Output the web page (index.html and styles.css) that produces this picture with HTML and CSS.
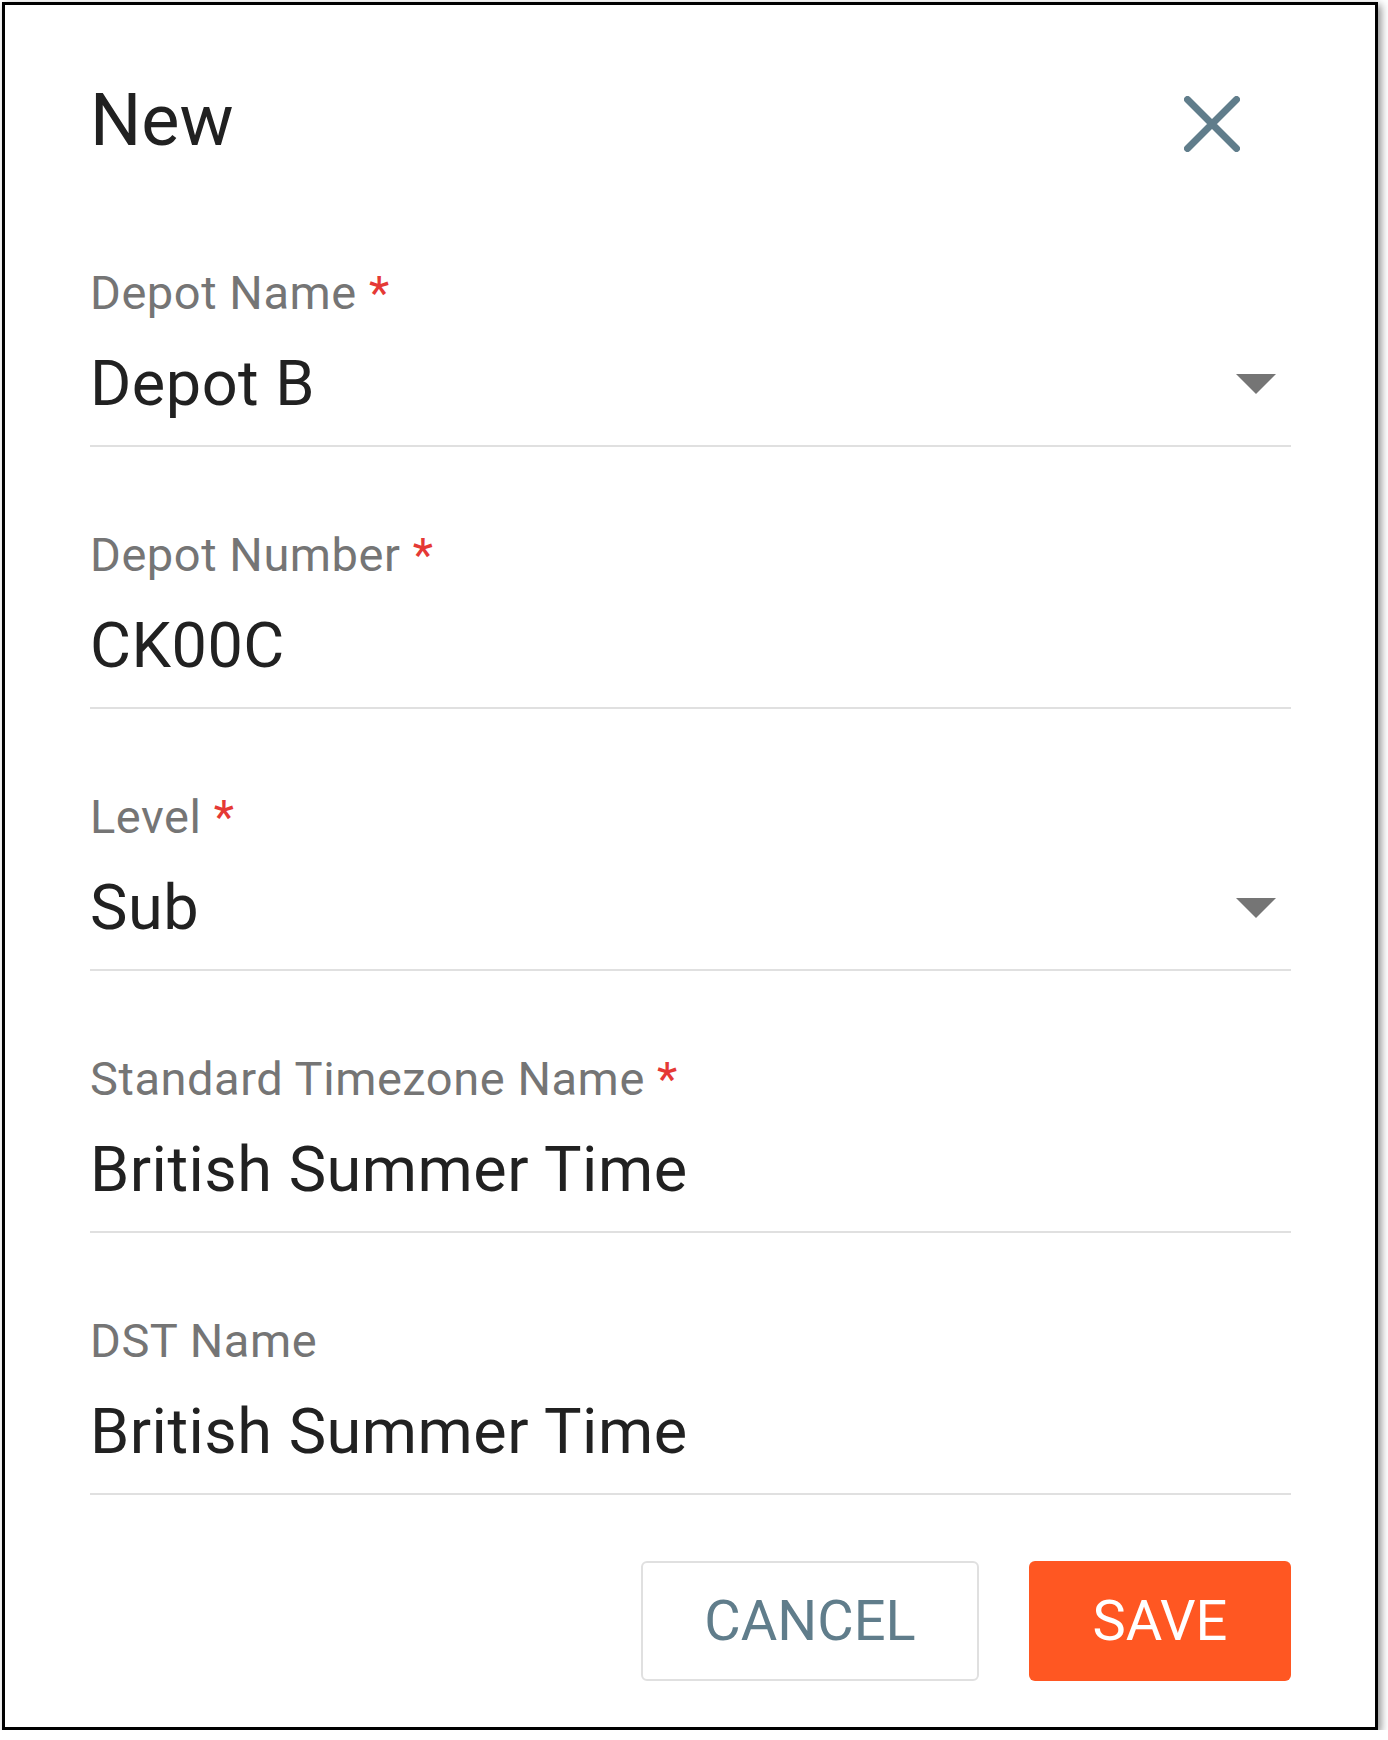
FILE: index.html
```html
<!DOCTYPE html>
<html lang="en">
<head>
  <meta charset="UTF-8" />
  <title>New Depot</title>
  <link rel="stylesheet" href="styles.css">
</head>
<body>

  <div class="dialogo">
    <header class="dialogo-header">
      <h1>New</h1>
      <button class="cerrar" aria-label="Close">
        <svg width="56" height="56" viewBox="0 0 56 56">
          <path d="M3.5 3.5L52.5 52.5M52.5 3.5L3.5 52.5" stroke="#607d8b" stroke-width="7" stroke-linecap="round" fill="none"/>
        </svg>
      </button>
    </header>

    <div class="formulario">
      <div class="campo">
        <label>Depot Name <span class="req">*</span></label>
        <div class="valor">
          <span>Depot B</span>
          <svg class="flecha" width="40" height="20" viewBox="0 0 10 5"><path d="M0 0L5 5L10 0Z" fill="#757575"/></svg>
        </div>
      </div>

      <div class="campo">
        <label>Depot Number <span class="req">*</span></label>
        <div class="valor"><span>CK00C</span></div>
      </div>

      <div class="campo">
        <label>Level <span class="req">*</span></label>
        <div class="valor">
          <span>Sub</span>
          <svg class="flecha" width="40" height="20" viewBox="0 0 10 5"><path d="M0 0L5 5L10 0Z" fill="#757575"/></svg>
        </div>
      </div>

      <div class="campo">
        <label>Standard Timezone Name <span class="req">*</span></label>
        <div class="valor"><span>British Summer Time</span></div>
      </div>

      <div class="campo">
        <label>DST Name</label>
        <div class="valor"><span>British Summer Time</span></div>
      </div>
    </div>

    <div class="acciones">
      <button class="btn btn-cancelar">CANCEL</button>
      <button class="btn btn-guardar">SAVE</button>
    </div>
  </div>

</body>
</html>
```

FILE: styles.css
```css
/* ===== Base ===== */
* { margin:0; padding:0; box-sizing:border-box; }
html, body { background:#fff; font-family: Roboto, "Liberation Sans", sans-serif; }

/* ===== Dialogo ===== */
.dialogo {
  margin:2px 0 0 2px;
  width:1376px; height:1728px;
  border:3px solid #000;
  background:#fff;
  box-shadow:3px 3px 8px rgba(0,0,0,0.45);
  padding:74px 84px 47px 85px;
  display:flex; flex-direction:column;
}

.dialogo-header {
  display:flex; justify-content:space-between; align-items:center;
  height:84px; margin-bottom:102px;
}
.dialogo-header h1 {
  font-size:72px; font-weight:400; line-height:84px;
  color:#212121;
}
.cerrar {
  background:none; border:none; cursor:pointer;
  width:56px; height:56px; margin:6px 51px 0 0;
  display:flex;
}

/* ===== Campos ===== */
.formulario { display:flex; flex-direction:column; gap:80px; }

.campo label {
  display:block;
  font-size:47px; line-height:56px; letter-spacing:0.55px;
  color:#757575;
  margin-bottom:27px;
}
.campo .req { color:#e53935; }

.valor {
  display:flex; justify-content:space-between; align-items:center;
  font-size:63px; line-height:72px; letter-spacing:0.5px;
  color:#212121;
  padding-bottom:25px;
  border-bottom:2px solid #e0e0e0;
}
.flecha { margin-right:15px; }

/* ===== Botones ===== */
.acciones {
  display:flex; justify-content:flex-end; gap:50px;
  margin-top:66px;
}
.btn {
  height:120px;
  font-family: Roboto, "Liberation Sans", sans-serif;
  font-size:56px; font-weight:400;
  border-radius:6px; cursor:pointer;
}
.btn-cancelar {
  width:338px;
  background:#fff; color:#607d8b;
  border:2px solid #e0e0e0;
}
.btn-guardar {
  width:262px;
  background:#ff5722; color:#fff;
  border:none;
}
```
